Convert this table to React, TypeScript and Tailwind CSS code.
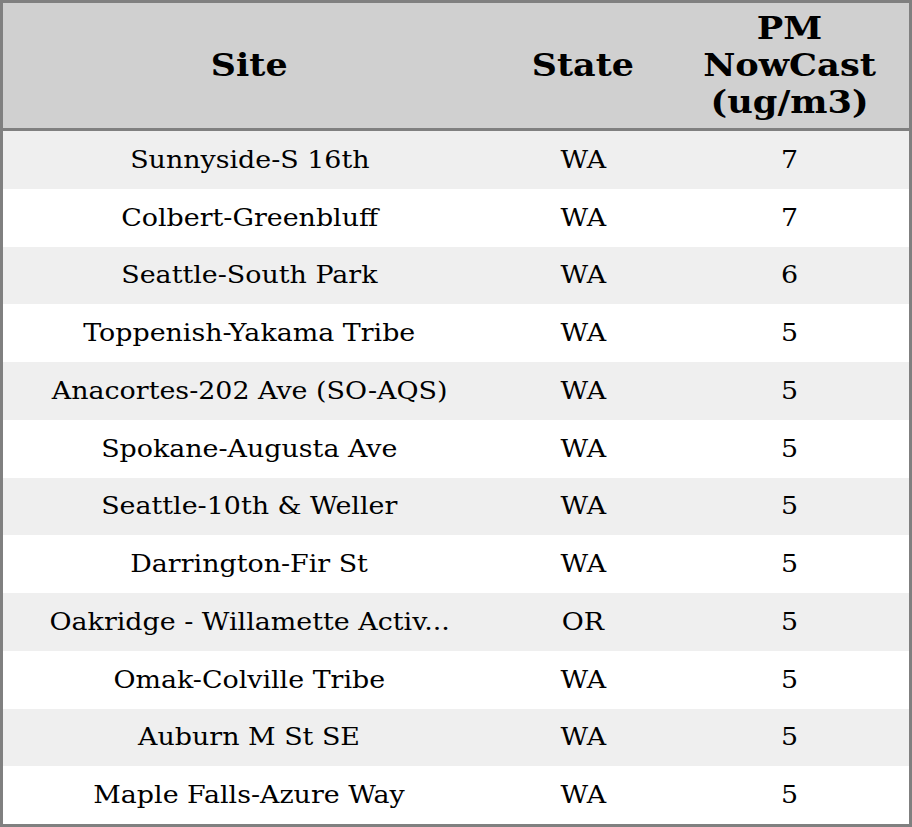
const rows: [string, string, number][] = [
  ["Sunnyside-S 16th", "WA", 7],
  ["Colbert-Greenbluff", "WA", 7],
  ["Seattle-South Park", "WA", 6],
  ["Toppenish-Yakama Tribe", "WA", 5],
  ["Anacortes-202 Ave (SO-AQS)", "WA", 5],
  ["Spokane-Augusta Ave", "WA", 5],
  ["Seattle-10th & Weller", "WA", 5],
  ["Darrington-Fir St", "WA", 5],
  ["Oakridge - Willamette Activ...", "OR", 5],
  ["Omak-Colville Tribe", "WA", 5],
  ["Auburn M St SE", "WA", 5],
  ["Maple Falls-Azure Way", "WA", 5],
];

export default function App() {
  return (
    <div className="w-[912px] h-[827px] border-[3px] border-[#808080] bg-white text-black font-['DejaVu_Serif',serif] flex flex-col">
      <div className="grid grid-cols-[493px_174px_1fr] h-[128px] bg-[#d0d0d0] border-b-[3px] border-[#808080] items-center text-center font-bold text-[32px] leading-[37px]">
        <div>
          <span className="inline-block scale-x-[1.09]">Site</span>
        </div>
        <div>
          <span className="inline-block scale-x-[1.09]">State</span>
        </div>
        <div>
          <span className="inline-block scale-x-[1.1]">
            PM
            <br />
            NowCast
            <br />
            (ug/m3)
          </span>
        </div>
      </div>
      <div className="flex-1 flex flex-col">
        {rows.map(([site, state, pm], i) => (
          <div
            key={site}
            className={`flex-1 grid grid-cols-[493px_174px_1fr] items-center text-center text-[24px] ${
              i % 2 === 0 ? "bg-[#efefef]" : "bg-white"
            }`}
          >
            <div>
              <span className="inline-block scale-x-[1.12]">{site}</span>
            </div>
            <div>
              <span className="inline-block scale-x-[1.12]">{state}</span>
            </div>
            <div>
              <span className="inline-block scale-x-[1.12]">{pm}</span>
            </div>
          </div>
        ))}
      </div>
    </div>
  );
}
